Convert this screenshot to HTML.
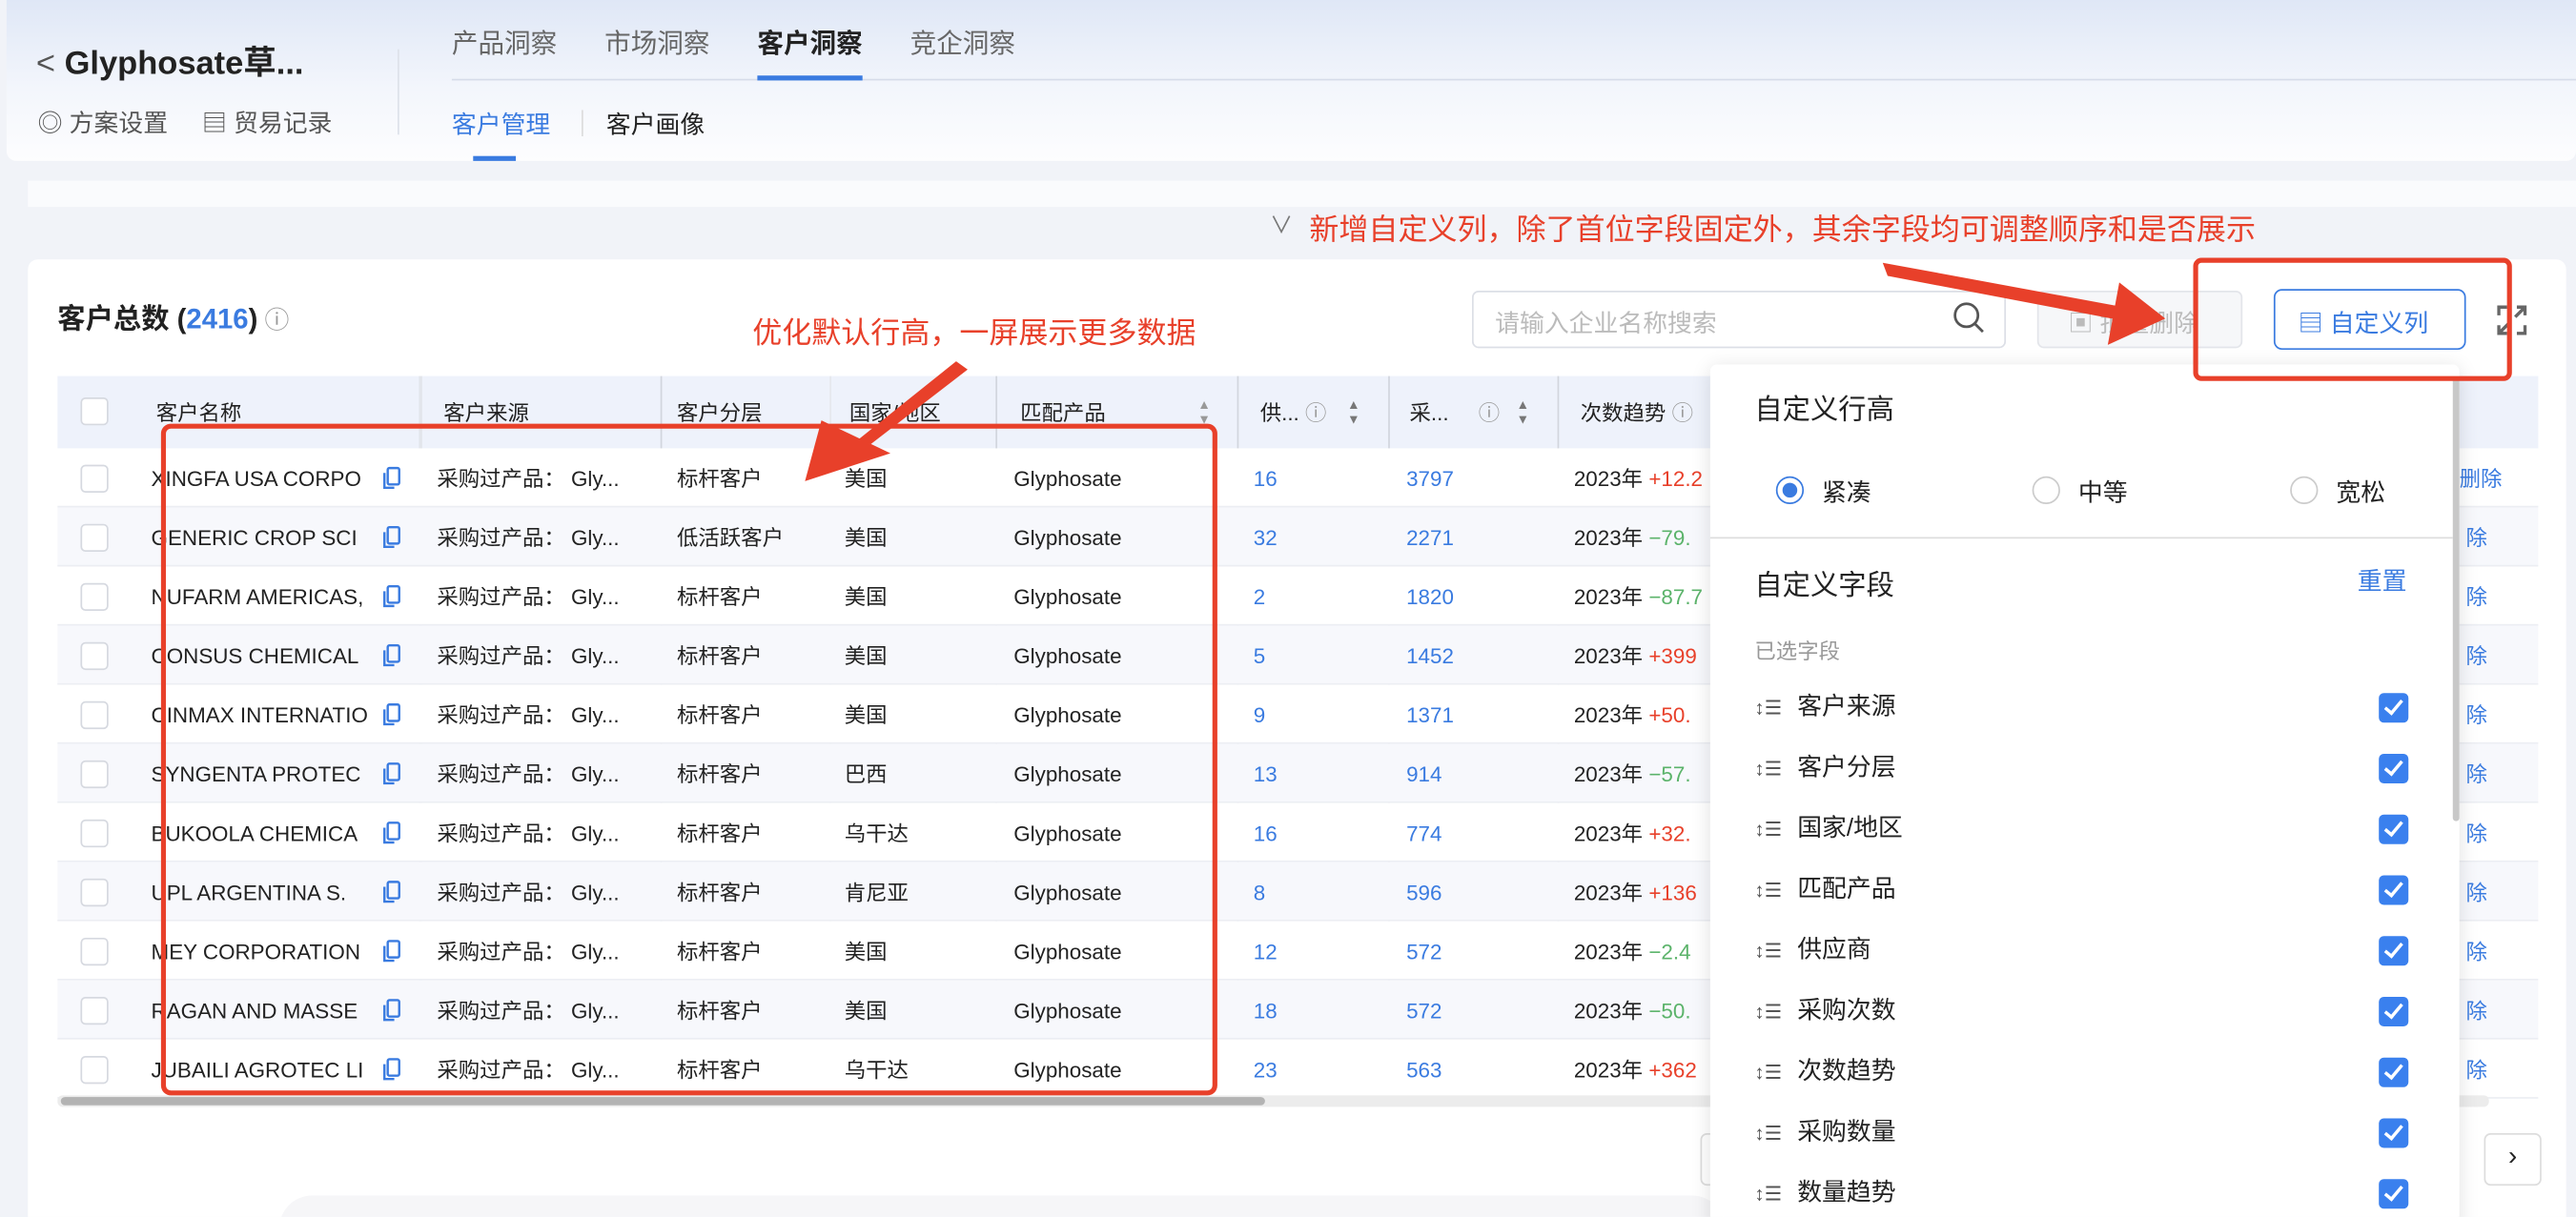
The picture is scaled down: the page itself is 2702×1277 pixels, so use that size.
<!DOCTYPE html>
<html><head><meta charset="utf-8">
<style>
*{box-sizing:border-box;margin:0;padding:0}
html,body{width:2702px;height:1276px;overflow:hidden;background:#f0f2f7}
body{font-family:"Liberation Sans","Noto Sans CJK SC",sans-serif;color:#222}
#s{position:absolute;left:0;top:0;width:1568px;height:741px;transform:scale(1.72321);transform-origin:0 0;overflow:hidden;background:#f1f3f8}
.a{position:absolute;white-space:nowrap}
.t{line-height:17px}
.hdr{position:absolute;left:4px;top:0;width:1564px;height:98px;background:linear-gradient(#dfe7f6,#f3f6fc 55%,#fdfdfe);border-radius:0 0 6px 6px}
.card{position:absolute;background:#fff}
.row{position:absolute;left:35px;width:1510px;height:36px;border-bottom:1px solid #eceef3;font-size:13px}
.cb{position:absolute;left:49px;width:17px;height:17px;border:1px solid #d6d9e0;border-radius:3px;background:#fff}
.vl{position:absolute;width:1px;background:#e6e8ee}
.blue{color:#3a7be0}.red{color:#e8402a}.green{color:#5bb36a}
.chk{position:absolute;left:1448px;width:18px;height:18px;background:#3a80ee;border-radius:3px}
.chk:after{content:"";position:absolute;left:6px;top:2px;width:4px;height:9px;border:solid #fff;border-width:0 2px 2px 0;transform:rotate(40deg)}
.fi{position:absolute;left:1068px;font-size:15px;color:#222;line-height:20px}
.fi i{display:inline-block;width:14px;font-style:normal;color:#555;font-size:12px;margin-right:12px}
</style></head><body><div id="s">
<div class="hdr"></div>
<div class="a" style="left:22px;top:22px;font-size:20px;font-weight:bold;color:#222"><span style="font-weight:normal;color:#555">&lt;</span> Glyphosate草...</div>
<div class="a" style="left:242px;top:30px;width:1px;height:52px;background:#dde2ea"></div>
<div class="a" style="left:23px;top:64px;font-size:15px;color:#555">◎ 方案设置 &nbsp;&nbsp;&nbsp; ▤ 贸易记录</div>
<div class="a" style="left:275px;top:13px;font-size:16px;color:#666">产品洞察</div>
<div class="a" style="left:368px;top:13px;font-size:16px;color:#666">市场洞察</div>
<div class="a" style="left:461px;top:13px;font-size:16px;color:#222;font-weight:bold">客户洞察</div>
<div class="a" style="left:554px;top:13px;font-size:16px;color:#666">竞企洞察</div>
<div class="a" style="left:275px;top:48px;width:1293px;height:1px;background:#d6dcea"></div>
<div class="a" style="left:461px;top:46px;width:64px;height:3px;background:#3a7be0"></div>
<div class="a" style="left:275px;top:65px;font-size:15px;color:#3a7be0">客户管理</div>
<div class="a" style="left:354px;top:67px;width:1px;height:16px;background:#ddd"></div>
<div class="a" style="left:369px;top:65px;font-size:15px;color:#222">客户画像</div>
<div class="a" style="left:288px;top:95px;width:26px;height:3px;background:#3a7be0"></div>
<div class="card" style="left:17px;top:110px;width:1551px;height:16px;background:#fafbfd"></div>
<div class="a" style="left:773px;top:127px;font-size:14px;color:#777">∨</div>
<div class="a" style="left:797px;top:126px;font-size:18px;color:#e8402a">新增自定义列，除了首位字段固定外，其余字段均可调整顺序和是否展示</div>
<div class="card" style="left:17px;top:158px;width:1545px;height:590px;border-radius:6px"></div>
<div class="a" style="left:35px;top:180px;font-size:17px;font-weight:bold">客户总数 (<span style="color:#3a7be0">2416</span>)<span style="font-weight:normal;color:#999;font-size:15px"> ⓘ</span></div>
<div class="a" style="left:458px;top:189px;font-size:18px;color:#e8402a">优化默认行高，一屏展示更多数据</div>
<div class="a" style="left:896px;top:177px;width:325px;height:35px;border:1px solid #dcdfe6;border-radius:4px;background:#fff"></div>
<div class="a" style="left:910px;top:186px;font-size:15px;color:#bbb">请输入企业名称搜索</div>
<svg class="a" style="left:1188px;top:183px" width="22" height="22"><circle cx="9" cy="9" r="7" fill="none" stroke="#555" stroke-width="1.6"/><line x1="14" y1="14" x2="19" y2="19" stroke="#555" stroke-width="1.6"/></svg>
<div class="a" style="left:1240px;top:177px;width:125px;height:35px;border:1px solid #e3e5ea;border-radius:4px;background:#f6f7f9;color:#bbb;font-size:15px;padding:8px 0 0 18px">▣ 批量删除</div>
<div class="a" style="left:1384px;top:176px;width:117px;height:37px;border:1px solid #3a7be0;border-radius:5px;background:#fff;color:#3a7be0;font-size:15px;padding:9px 0 0 14px">▤ 自定义列</div>
<svg class="a" style="left:1520px;top:186px" width="18" height="18"><g fill="none" stroke="#666" stroke-width="2"><path d="M1 6V1h5M12 1h5v5M17 12v5h-5M6 17H1v-5M2 16l5-5M16 2l-5 5"/></g></svg>
<!-- table header -->
<div class="a" style="left:35px;top:229px;width:1510px;height:44px;background:#eef2fb"></div>
<div class="cb" style="top:242px"></div>
<div class="a t" style="left:95px;top:243px;font-size:13px">客户名称</div>
<div class="a t" style="left:270px;top:243px;font-size:13px">客户来源</div>
<div class="a t" style="left:412px;top:243px;font-size:13px">客户分层</div>
<div class="a t" style="left:517px;top:243px;font-size:13px">国家/地区</div>
<div class="a t" style="left:621px;top:243px;font-size:13px">匹配产品</div>
<div class="a" style="left:729px;top:242px;font-size:8px;line-height:9px;color:#999">▲<br>▼</div>
<div class="a t" style="left:767px;top:243px;font-size:13px">供... <span style="color:#999">ⓘ</span></div>
<div class="a" style="left:820px;top:242px;font-size:8px;line-height:9px;color:#777">▲<br>▼</div>
<div class="a t" style="left:858px;top:243px;font-size:13px">采... <span style="color:#999">&nbsp;&nbsp;&nbsp;&nbsp;ⓘ</span></div>
<div class="a" style="left:923px;top:242px;font-size:8px;line-height:9px;color:#777">▲<br>▼</div>
<div class="a t" style="left:962px;top:243px;font-size:13px">次数趋势 <span style="color:#999">ⓘ</span></div>
<div class="vl" style="left:255px;top:229px;height:440px;background:#e2e5eb;width:2px"></div>
<div class="vl" style="left:402px;top:229px;height:440px;background:#d2d6de"></div>
<div class="vl" style="left:505px;top:229px;height:440px"></div>
<div class="vl" style="left:606px;top:229px;height:440px;background:#d2d6de"></div>
<div class="vl" style="left:753px;top:229px;height:440px;background:#d2d6de"></div>
<div class="vl" style="left:845px;top:229px;height:440px;background:#d2d6de"></div>
<div class="vl" style="left:948px;top:229px;height:440px;background:#d2d6de"></div>
<div id="rows"></div>
<div class="a" style="left:35px;top:667px;width:1480px;height:7px;background:#ececec;border-radius:3px"></div>
<div class="a" style="left:37px;top:668px;width:733px;height:5px;background:#b3b3b3;border-radius:3px"></div>
<div class="a" style="left:1035px;top:690px;width:10px;height:32px;border:1px solid #ddd;border-radius:4px"></div>
<div class="a" style="left:1512px;top:690px;width:35px;height:32px;border:1px solid #ddd;border-radius:4px;background:#fff;font-size:16px;text-align:center;padding-top:5px">›</div>
<div class="a" style="left:170px;top:728px;width:880px;height:40px;border-radius:30px;background:#f6f6f8"></div>
<!-- panel -->
<div class="a" style="left:1041px;top:222px;width:456px;height:530px;background:#fff;box-shadow:0 2px 12px rgba(0,0,0,.12);border-radius:4px"></div>
<div class="a" style="left:1493px;top:230px;width:4px;height:270px;background:#c8c8c8;border-radius:2px"></div>
<div class="a" style="left:1068px;top:235px;font-size:17px">自定义行高</div>
<div class="a" style="left:1081px;top:290px;width:17px;height:17px;border:1px solid #3a7be0;border-radius:50%"><div style="margin:3px;width:9px;height:9px;border-radius:50%;background:#3a7be0"></div></div>
<div class="a" style="left:1109px;top:289px;font-size:15px">紧凑</div>
<div class="a" style="left:1237px;top:290px;width:17px;height:17px;border:1px solid #ccc;border-radius:50%"></div>
<div class="a" style="left:1265px;top:289px;font-size:15px">中等</div>
<div class="a" style="left:1394px;top:290px;width:17px;height:17px;border:1px solid #ccc;border-radius:50%"></div>
<div class="a" style="left:1422px;top:289px;font-size:15px">宽松</div>
<div class="a" style="left:1041px;top:327px;width:452px;height:1px;background:#ddd"></div>
<div class="a" style="left:1068px;top:342px;font-size:17px">自定义字段</div>
<div class="a" style="left:1435px;top:343px;font-size:15px;color:#3a7be0">重置</div>
<div class="a" style="left:1068px;top:386px;font-size:13px;color:#999">已选字段</div>
<div id="fields"></div>
<!-- red annotations -->
<div class="a" style="left:98px;top:258px;width:643px;height:409px;border:3px solid #e8402a;border-radius:6px"></div>
<div class="a" style="left:1335px;top:157px;width:194px;height:75px;border:3px solid #e8402a;border-radius:5px"></div>
<svg class="a" style="left:0;top:0" width="1568" height="741">
<polygon fill="#e8402a" points="582,220 589,225 528,272 522,268"/>
<polygon fill="#e8402a" points="490,293 500,256 542,276"/>
<polygon fill="#e8402a" points="1146,160 1149,168 1296,196 1298,188"/>
<polygon fill="#e8402a" points="1318,194 1290,172 1283,210"/>
</svg>
</div>
<script>
var N=["XINGFA USA CORPO","GENERIC CROP SCI","NUFARM AMERICAS,","CONSUS CHEMICAL","CINMAX INTERNATIO","SYNGENTA PROTEC","BUKOOLA CHEMICA","UPL ARGENTINA S.","MEY CORPORATION","RAGAN AND MASSE","JUBAILI AGROTEC LI"];
var C=["美国","美国","美国","美国","美国","巴西","乌干达","肯尼亚","美国","美国","乌干达"];
var S=[16,32,2,5,9,13,16,8,12,18,23],B=[3797,2271,1820,1452,1371,914,774,596,572,572,563];
var T=[["+12.2","red"],["−79.","green"],["−87.7","green"],["+399","red"],["+50.","red"],["−57.","green"],["+32.","red"],["+136","red"],["−2.4","green"],["−50.","green"],["+362","red"]];
var h="";
for(var i=0;i<11;i++){var y=273+36*i,ty=y+10;
h+='<div class="row" style="top:'+y+'px;background:'+(i%2?'#f7f8fc':'#fff')+'"></div>';
h+='<div class="cb" style="top:'+(y+10)+'px"></div>';
h+='<div class="a t" style="left:92px;top:'+ty+'px;font-size:13px;width:140px;overflow:hidden">'+N[i]+'</div>';
h+='<svg class="a" style="left:233px;top:'+(y+11)+'px" width="11" height="14"><rect x="3" y="1" width="7" height="10" rx="1" fill="none" stroke="#3a7be0" stroke-width="1.4"/><path d="M1 4v9h6" fill="none" stroke="#3a7be0" stroke-width="1.4"/></svg>';
h+='<div class="a t" style="left:266px;top:'+ty+'px;font-size:13px">采购过产品： Gly...</div>';
h+='<div class="a t" style="left:412px;top:'+ty+'px;font-size:13px">'+(i==1?'低活跃客户':'标杆客户')+'</div>';
h+='<div class="a t" style="left:514px;top:'+ty+'px;font-size:13px">'+C[i]+'</div>';
h+='<div class="a t" style="left:617px;top:'+ty+'px;font-size:13px">Glyphosate</div>';
h+='<div class="a t blue" style="left:763px;top:'+ty+'px;font-size:13px">'+S[i]+'</div>';
h+='<div class="a t blue" style="left:856px;top:'+ty+'px;font-size:13px">'+B[i]+'</div>';
h+='<div class="a t" style="left:958px;top:'+ty+'px;font-size:13px">2023年 <span class="'+T[i][1]+'">'+T[i][0]+'</span></div>';
h+='<div class="a t blue" style="left:'+(i?1501:1497)+'px;top:'+ty+'px;font-size:13px">'+(i?'除':'删除')+'</div>';}
document.getElementById('rows').innerHTML=h;
var F=["客户来源","客户分层","国家/地区","匹配产品","供应商","采购次数","次数趋势","采购数量","数量趋势"],g="";
for(var j=0;j<F.length;j++){var y=421+37*j;g+='<div class="fi a" style="top:'+y+'px"><i>↕☰</i>'+F[j]+'</div><div class="chk" style="top:'+(y+1)+'px"></div>';}
document.getElementById('fields').innerHTML=g;
</script>
</body></html>
